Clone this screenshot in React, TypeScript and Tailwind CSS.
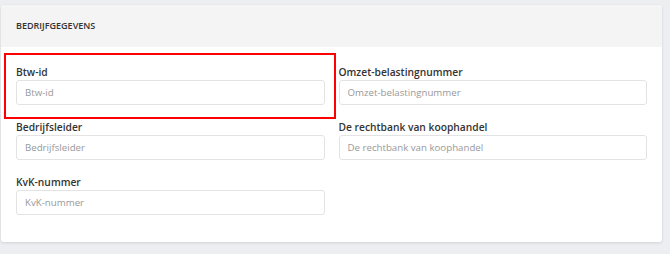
export default function App() {
  const fields = [
    ['Btw-id', 'Omzet-belastingnummer'],
    ['Bedrijfsleider', 'De rechtbank van koophandel'],
    ['KvK-nummer', null],
  ]

  return (
    <div
      className="relative h-[254px] w-[670px] bg-[#eceef2] pt-[5px] pl-[1px]"
      style={{ fontFamily: '"Open Sans", sans-serif' }}
    >
      <div className="w-[661px] overflow-hidden rounded-[3px] bg-white shadow-[0_1px_3px_rgba(0,0,0,0.12)]">
        {/* Header */}
        <div className="flex h-[42px] items-center bg-[#f4f4f4] px-[15px] text-[9px] font-semibold text-[#333]">
          BEDRIJFGEGEVENS
        </div>

        {/* Form */}
        <div className="grid grid-cols-2 gap-x-[14px] gap-y-[14px] px-[15px] pt-[17px] pb-[27px]">
          {fields.flat().map((name, i) =>
            name ? (
              <div key={i}>
                <label className="block text-[10.25px] leading-[16px] font-semibold text-[#333]">{name}</label>
                <input
                  placeholder={name}
                  className="block h-[25px] w-full rounded-[3px] border border-[#e3e3e3] px-[8px] text-[9.7px] text-[#333] outline-none placeholder:text-[#999]"
                />
              </div>
            ) : (
              <div key={i} />
            )
          )}
        </div>
      </div>

      {/* highlight */}
      <div className="pointer-events-none absolute top-[53px] left-[4px] h-[66px] w-[332px] border-2 border-[#ff0000]" />
    </div>
  )
}
